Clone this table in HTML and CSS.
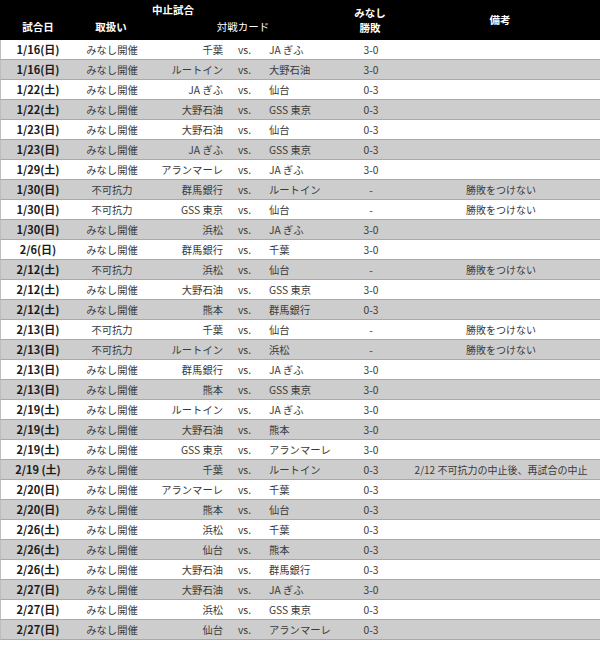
FILE: index.html
```html
<!DOCTYPE html>
<html lang="ja">
<head>
<meta charset="utf-8">
<link rel="stylesheet" href="styles.css">
</head>
<body>
<div class="table">
  <div class="head">
    <div class="h-group">中止試合</div>
    <div class="h-date">試合日</div>
    <div class="h-type">取扱い</div>
    <div class="h-card">対戦カード</div>
    <div class="h-score">みなし<br>勝敗</div>
    <div class="h-note">備考</div>
  </div>
  <div class="row"><span class="d">1/16(日)</span><span class="t">みなし開催</span><span class="a">千葉</span><span class="v">vs.</span><span class="b">JA ぎふ</span><span class="s">3-0</span><span class="n"></span></div>
  <div class="row g"><span class="d">1/16(日)</span><span class="t">みなし開催</span><span class="a">ルートイン</span><span class="v">vs.</span><span class="b">大野石油</span><span class="s">3-0</span><span class="n"></span></div>
  <div class="row"><span class="d">1/22(土)</span><span class="t">みなし開催</span><span class="a">JA ぎふ</span><span class="v">vs.</span><span class="b">仙台</span><span class="s">0-3</span><span class="n"></span></div>
  <div class="row g"><span class="d">1/22(土)</span><span class="t">みなし開催</span><span class="a">大野石油</span><span class="v">vs.</span><span class="b">GSS 東京</span><span class="s">0-3</span><span class="n"></span></div>
  <div class="row"><span class="d">1/23(日)</span><span class="t">みなし開催</span><span class="a">大野石油</span><span class="v">vs.</span><span class="b">仙台</span><span class="s">0-3</span><span class="n"></span></div>
  <div class="row g"><span class="d">1/23(日)</span><span class="t">みなし開催</span><span class="a">JA ぎふ</span><span class="v">vs.</span><span class="b">GSS 東京</span><span class="s">0-3</span><span class="n"></span></div>
  <div class="row"><span class="d">1/29(土)</span><span class="t">みなし開催</span><span class="a">アランマーレ</span><span class="v">vs.</span><span class="b">JA ぎふ</span><span class="s">3-0</span><span class="n"></span></div>
  <div class="row g"><span class="d">1/30(日)</span><span class="t">不可抗力</span><span class="a">群馬銀行</span><span class="v">vs.</span><span class="b">ルートイン</span><span class="s">-</span><span class="n">勝敗をつけない</span></div>
  <div class="row"><span class="d">1/30(日)</span><span class="t">不可抗力</span><span class="a">GSS 東京</span><span class="v">vs.</span><span class="b">仙台</span><span class="s">-</span><span class="n">勝敗をつけない</span></div>
  <div class="row g"><span class="d">1/30(日)</span><span class="t">みなし開催</span><span class="a">浜松</span><span class="v">vs.</span><span class="b">JA ぎふ</span><span class="s">3-0</span><span class="n"></span></div>
  <div class="row"><span class="d">2/6(日)</span><span class="t">みなし開催</span><span class="a">群馬銀行</span><span class="v">vs.</span><span class="b">千葉</span><span class="s">3-0</span><span class="n"></span></div>
  <div class="row g"><span class="d">2/12(土)</span><span class="t">不可抗力</span><span class="a">浜松</span><span class="v">vs.</span><span class="b">仙台</span><span class="s">-</span><span class="n">勝敗をつけない</span></div>
  <div class="row"><span class="d">2/12(土)</span><span class="t">みなし開催</span><span class="a">大野石油</span><span class="v">vs.</span><span class="b">GSS 東京</span><span class="s">3-0</span><span class="n"></span></div>
  <div class="row g"><span class="d">2/12(土)</span><span class="t">みなし開催</span><span class="a">熊本</span><span class="v">vs.</span><span class="b">群馬銀行</span><span class="s">0-3</span><span class="n"></span></div>
  <div class="row"><span class="d">2/13(日)</span><span class="t">不可抗力</span><span class="a">千葉</span><span class="v">vs.</span><span class="b">仙台</span><span class="s">-</span><span class="n">勝敗をつけない</span></div>
  <div class="row g"><span class="d">2/13(日)</span><span class="t">不可抗力</span><span class="a">ルートイン</span><span class="v">vs.</span><span class="b">浜松</span><span class="s">-</span><span class="n">勝敗をつけない</span></div>
  <div class="row"><span class="d">2/13(日)</span><span class="t">みなし開催</span><span class="a">群馬銀行</span><span class="v">vs.</span><span class="b">JA ぎふ</span><span class="s">3-0</span><span class="n"></span></div>
  <div class="row g"><span class="d">2/13(日)</span><span class="t">みなし開催</span><span class="a">熊本</span><span class="v">vs.</span><span class="b">GSS 東京</span><span class="s">3-0</span><span class="n"></span></div>
  <div class="row"><span class="d">2/19(土)</span><span class="t">みなし開催</span><span class="a">ルートイン</span><span class="v">vs.</span><span class="b">JA ぎふ</span><span class="s">3-0</span><span class="n"></span></div>
  <div class="row g"><span class="d">2/19(土)</span><span class="t">みなし開催</span><span class="a">大野石油</span><span class="v">vs.</span><span class="b">熊本</span><span class="s">3-0</span><span class="n"></span></div>
  <div class="row"><span class="d">2/19(土)</span><span class="t">みなし開催</span><span class="a">GSS 東京</span><span class="v">vs.</span><span class="b">アランマーレ</span><span class="s">3-0</span><span class="n"></span></div>
  <div class="row g"><span class="d">2/19 (土)</span><span class="t">みなし開催</span><span class="a">千葉</span><span class="v">vs.</span><span class="b">ルートイン</span><span class="s">0-3</span><span class="n">2/12 不可抗力の中止後、再試合の中止</span></div>
  <div class="row"><span class="d">2/20(日)</span><span class="t">みなし開催</span><span class="a">アランマーレ</span><span class="v">vs.</span><span class="b">千葉</span><span class="s">0-3</span><span class="n"></span></div>
  <div class="row g"><span class="d">2/20(日)</span><span class="t">みなし開催</span><span class="a">熊本</span><span class="v">vs.</span><span class="b">仙台</span><span class="s">0-3</span><span class="n"></span></div>
  <div class="row"><span class="d">2/26(土)</span><span class="t">みなし開催</span><span class="a">浜松</span><span class="v">vs.</span><span class="b">千葉</span><span class="s">0-3</span><span class="n"></span></div>
  <div class="row g"><span class="d">2/26(土)</span><span class="t">みなし開催</span><span class="a">仙台</span><span class="v">vs.</span><span class="b">熊本</span><span class="s">0-3</span><span class="n"></span></div>
  <div class="row"><span class="d">2/26(土)</span><span class="t">みなし開催</span><span class="a">大野石油</span><span class="v">vs.</span><span class="b">群馬銀行</span><span class="s">0-3</span><span class="n"></span></div>
  <div class="row g"><span class="d">2/27(日)</span><span class="t">みなし開催</span><span class="a">大野石油</span><span class="v">vs.</span><span class="b">JA ぎふ</span><span class="s">3-0</span><span class="n"></span></div>
  <div class="row"><span class="d">2/27(日)</span><span class="t">みなし開催</span><span class="a">浜松</span><span class="v">vs.</span><span class="b">GSS 東京</span><span class="s">0-3</span><span class="n"></span></div>
  <div class="row g"><span class="d">2/27(日)</span><span class="t">みなし開催</span><span class="a">仙台</span><span class="v">vs.</span><span class="b">アランマーレ</span><span class="s">0-3</span><span class="n"></span></div>
</div>
</body>
</html>
```

FILE: styles.css
```css
html, body {
  margin: 0;
  padding: 0;
  background: #ffffff;
}
body {
  font-family: "Noto Sans CJK JP", "Noto Sans", sans-serif;
  font-size: 10.3px;
  color: #3a3a3a;
}
.table {
  width: 600px;
}
.head {
  height: 40px;
  background: #000000;
  color: #ffffff;
  font-weight: bold;
  font-size: 10.5px;
  display: grid;
  grid-template-columns: 76px 70px 82px 30px 82px 60px 200px;
  grid-template-rows: 19px 21px;
  line-height: 14px;
}
.h-group {
  grid-column: 2 / 5;
  grid-row: 1;
  text-align: center;
  padding-left: 12px;
  padding-top: 3px;
}
.h-date {
  grid-column: 1;
  grid-row: 2;
  text-align: center;
  padding-top: 1px;
}
.h-type {
  grid-column: 2;
  grid-row: 2;
  text-align: center;
  padding-top: 1px;
}
.h-card {
  grid-column: 3 / 6;
  grid-row: 2;
  text-align: center;
  padding-top: 1px;
  font-weight: normal;
}
.h-score {
  grid-column: 6;
  grid-row: 1 / 3;
  text-align: center;
  line-height: 15px;
  padding-top: 5px;
}
.h-note {
  grid-column: 7;
  grid-row: 1 / 3;
  text-align: center;
  align-self: center;
}
.row {
  display: grid;
  grid-template-columns: 76px 70px 82px 30px 82px 60px 200px;
  height: 20px;
  box-sizing: border-box;
  border-bottom: 1px solid #a9a9a9;
  border-left: 1px solid #bdbdbd;
  line-height: 19px;
  white-space: nowrap;
}
.row.g {
  background: #cdcdcd;
}
.d {
  text-align: center;
  font-weight: bold;
  font-size: 11px;
  color: #1a1a1a;
  padding-right: 2px;
}
.t {
  text-align: center;
}
.a {
  text-align: right;
  padding-right: 6px;
}
.v {
  padding-left: 9px;
}
.b {
  padding-left: 10px;
}
.s {
  text-align: center;
}
.n {
  text-align: center;
  font-size: 10px;
}
```
